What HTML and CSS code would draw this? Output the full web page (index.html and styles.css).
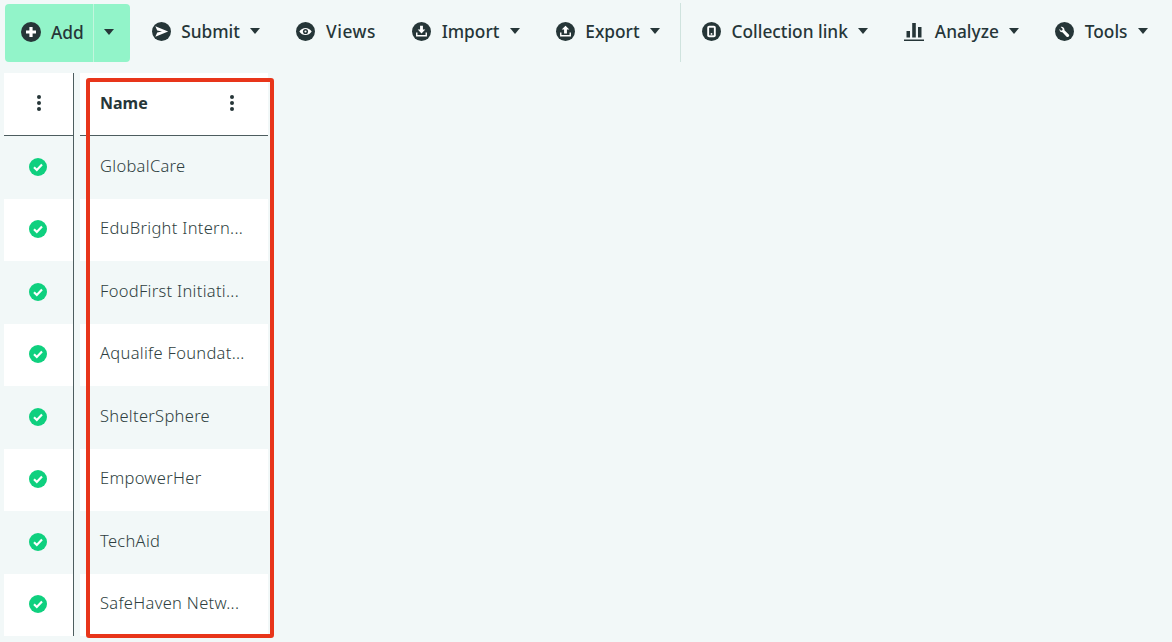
FILE: index.html
```html
<!DOCTYPE html>
<html lang="en">
<head>
    <meta charset="UTF-8">
    <title>Collection</title>
    <link rel="stylesheet" href="styles.css">
</head>
<body>
    <div class="toolbar">
        <div class="add-btn">
            <span class="add-main">
                <svg class="icon icon-add" viewBox="0 0 20 20"><circle cx="10" cy="10" r="10" fill="#263638"/><path d="M10 5v10M5 10h10" stroke="#fff" stroke-width="3.200"/></svg>
                <span>Add</span>
            </span>
            <span class="add-drop"><i class="caret"></i></span>
        </div>
        <div class="tool">
            <svg class="icon" viewBox="0 0 20 20"><circle cx="10" cy="10" r="10" fill="#263638"/><path d="M3.500 4.500L17 10 3.500 15.500 5.500 11l5-1-5-1z" fill="#fff"/></svg>
            <span>Submit</span><i class="caret"></i>
        </div>
        <div class="tool">
            <svg class="icon" viewBox="0 0 20 20"><circle cx="10" cy="10" r="10" fill="#263638"/><path d="M3.500 10c3-5 10-5 13 0-3 5-10 5-13 0z" fill="#fff"/><circle cx="10" cy="10" r="2.700" fill="#263638"/><circle cx="10" cy="10" r="1.100" fill="#fff"/></svg>
            <span class="wide">Views</span>
        </div>
        <div class="tool">
            <svg class="icon" viewBox="0 0 20 20"><circle cx="10" cy="10" r="10" fill="#263638"/><path d="M8.500 4h3v4h2.500L10 12 6 8h2.500z" fill="#fff"/><path d="M5 11v3.500h10V11" fill="none" stroke="#fff" stroke-width="1.500"/></svg>
            <span>Import</span><i class="caret"></i>
        </div>
        <div class="tool">
            <svg class="icon" viewBox="0 0 20 20"><circle cx="10" cy="10" r="10" fill="#263638"/><path d="M8.500 12h3V8H14L10 4 6 8h2.500z" fill="#fff"/><path d="M5 11v3.500h10V11" fill="none" stroke="#fff" stroke-width="1.500"/></svg>
            <span>Export</span><i class="caret"></i>
        </div>
        <div class="divider"></div>
        <div class="tool">
            <svg class="icon" viewBox="0 0 20 20"><circle cx="10" cy="10" r="10" fill="#263638"/><rect x="5.500" y="4" width="9" height="12" rx="2" fill="#fff"/><rect x="7.500" y="6" width="5" height="8" fill="#263638"/><circle cx="10" cy="12.500" r="1" fill="#fff"/></svg>
            <span>Collection link</span><i class="caret"></i>
        </div>
        <div class="tool">
            <svg class="icon icon-bars" viewBox="0 0 20 20"><path d="M2.500 10h3.500v6.500H2.500zM8.200 2h3.600v14.500H8.200zM14 6h3.500v10.500H14z" fill="#263638"/><rect y="18.500" width="20" height="1.500" fill="#263638"/></svg>
            <span>Analyze</span><i class="caret"></i>
        </div>
        <div class="tool">
            <svg class="icon" viewBox="0 0 20 20"><circle cx="10" cy="10" r="10" fill="#263638"/><path d="M6 5.200l2.200 2.200-.6 1.300-1.300.6-1.500-2.100c-.4 2 .7 3.800 3 3.700l4.400 4.500c.6.600 1.500.6 2 0l.3-.3c.6-.6.6-1.400 0-2l-4.500-4.400C10.200 6 8 4.700 6 5.200z" fill="#fff"/></svg>
            <span>Tools</span><i class="caret"></i>
        </div>
    </div>

    <div class="table-wrap">
        <div class="status-col">
            <div class="head"><i class="dots"></i></div>
            <div class="cell"><svg class="check" viewBox="0 0 18 18"><circle cx="9" cy="9" r="9" fill="#0fd07f"/><path d="M5 9.300l2.800 2.700L13 6.600" fill="none" stroke="#fff" stroke-width="2.200"/></svg></div>
            <div class="cell"><svg class="check" viewBox="0 0 18 18"><circle cx="9" cy="9" r="9" fill="#0fd07f"/><path d="M5 9.300l2.800 2.700L13 6.600" fill="none" stroke="#fff" stroke-width="2.200"/></svg></div>
            <div class="cell"><svg class="check" viewBox="0 0 18 18"><circle cx="9" cy="9" r="9" fill="#0fd07f"/><path d="M5 9.300l2.800 2.700L13 6.600" fill="none" stroke="#fff" stroke-width="2.200"/></svg></div>
            <div class="cell"><svg class="check" viewBox="0 0 18 18"><circle cx="9" cy="9" r="9" fill="#0fd07f"/><path d="M5 9.300l2.800 2.700L13 6.600" fill="none" stroke="#fff" stroke-width="2.200"/></svg></div>
            <div class="cell"><svg class="check" viewBox="0 0 18 18"><circle cx="9" cy="9" r="9" fill="#0fd07f"/><path d="M5 9.300l2.800 2.700L13 6.600" fill="none" stroke="#fff" stroke-width="2.200"/></svg></div>
            <div class="cell"><svg class="check" viewBox="0 0 18 18"><circle cx="9" cy="9" r="9" fill="#0fd07f"/><path d="M5 9.300l2.800 2.700L13 6.600" fill="none" stroke="#fff" stroke-width="2.200"/></svg></div>
            <div class="cell"><svg class="check" viewBox="0 0 18 18"><circle cx="9" cy="9" r="9" fill="#0fd07f"/><path d="M5 9.300l2.800 2.700L13 6.600" fill="none" stroke="#fff" stroke-width="2.200"/></svg></div>
            <div class="cell"><svg class="check" viewBox="0 0 18 18"><circle cx="9" cy="9" r="9" fill="#0fd07f"/><path d="M5 9.300l2.800 2.700L13 6.600" fill="none" stroke="#fff" stroke-width="2.200"/></svg></div>
        </div>
        <div class="name-col">
            <div class="head"><b>Name</b><i class="dots"></i></div>
            <div class="cell">GlobalCare</div>
            <div class="cell">EduBright Intern...</div>
            <div class="cell">FoodFirst Initiati...</div>
            <div class="cell">Aqualife Foundat...</div>
            <div class="cell">ShelterSphere</div>
            <div class="cell">EmpowerHer</div>
            <div class="cell">TechAid</div>
            <div class="cell">SafeHaven Netw...</div>
            <div class="highlight"></div>
        </div>
    </div>
</body>
</html>
```
FILE: styles.css
```css
* {
    box-sizing: border-box;
}
html, body {
    height: 100%;
}
body {
    margin: 0;
    background-color: #f2f8f8;
    font-family: "Noto Sans", sans-serif;
    color: #263638;
    overflow: hidden;
}

.toolbar {
    display: flex;
    align-items: center;
    height: 62px;
    padding-left: 5px;
    font-size: 17.3px;
    font-weight: 500;
}
.icon {
    width: 19px;
    height: 19px;
    flex: none;
}
.icon-add,
.icon-bars {
    width: 20px;
    height: 20px;
}
.caret {
    width: 0;
    height: 0;
    border-left: 5px solid transparent;
    border-right: 5px solid transparent;
    border-top: 6px solid #263638;
}
.add-btn {
    display: flex;
    width: 125px;
    height: 58px;
    margin-top: 4px;
    background-color: #92f4c9;
    border-radius: 4px;
}
.add-main {
    display: flex;
    align-items: center;
    gap: 10px;
    width: 89px;
    padding: 0 0 2px 16px;
    border-right: 1px solid #c2f6dd;
}
.add-drop {
    display: flex;
    flex: 1;
    align-items: center;
    justify-content: center;
    padding: 0 6px 2px 0;
}
.tool {
    display: flex;
    align-items: center;
    gap: 10.5px;
    padding: 0 18px;
    white-space: nowrap;
}
.add-btn + .tool {
    padding-left: 21.7px;
}
.wide {
    letter-spacing: 0.6px;
}
.divider {
    align-self: flex-end;
    width: 1px;
    height: 59px;
    margin: 0 3px 0 2px;
    background-color: #cfe3de;
}

.table-wrap {
    display: flex;
    gap: 6px;
    width: 264px;
    margin: 11px 0 0 4px;
    font-size: 16.5px;
    font-weight: 300;
    letter-spacing: 0.3px;
}
.status-col {
    width: 70px;
    border-right: 1px solid #4d5d5f;
}
.name-col {
    position: relative;
    width: 188px;
}
.head {
    display: flex;
    align-items: center;
    height: 63px;
    padding-bottom: 2px;
    background-color: #fff;
    border-bottom: 1px solid #4d5d5f;
}
.status-col .head {
    justify-content: center;
}
.name-col .head {
    justify-content: space-between;
    padding: 0 34px 2px 20px;
}
.head b {
    font-weight: 700;
    font-size: 16px;
    letter-spacing: 0;
}
.dots {
    width: 4px;
    height: 4px;
    border-radius: 50%;
    background-color: #263638;
    box-shadow: 0 -6px 0 #263638, 0 6px 0 #263638;
}
.cell {
    display: flex;
    align-items: center;
    height: 62.5px;
    background-color: #fff;
    color: #2f3f41;
    white-space: nowrap;
}
.cell:nth-child(even) {
    background-color: #f2f8f8;
}
.status-col .cell {
    justify-content: center;
    padding: 0 1px 1px 0;
}
.name-col .cell {
    padding: 0 0 4px 20px;
}
.check {
    width: 18px;
    height: 18px;
}
.highlight {
    position: absolute;
    left: 6px;
    top: 5px;
    width: 188px;
    height: 560px;
    border: 4px solid #e8351a;
    border-radius: 3px;
}
```
